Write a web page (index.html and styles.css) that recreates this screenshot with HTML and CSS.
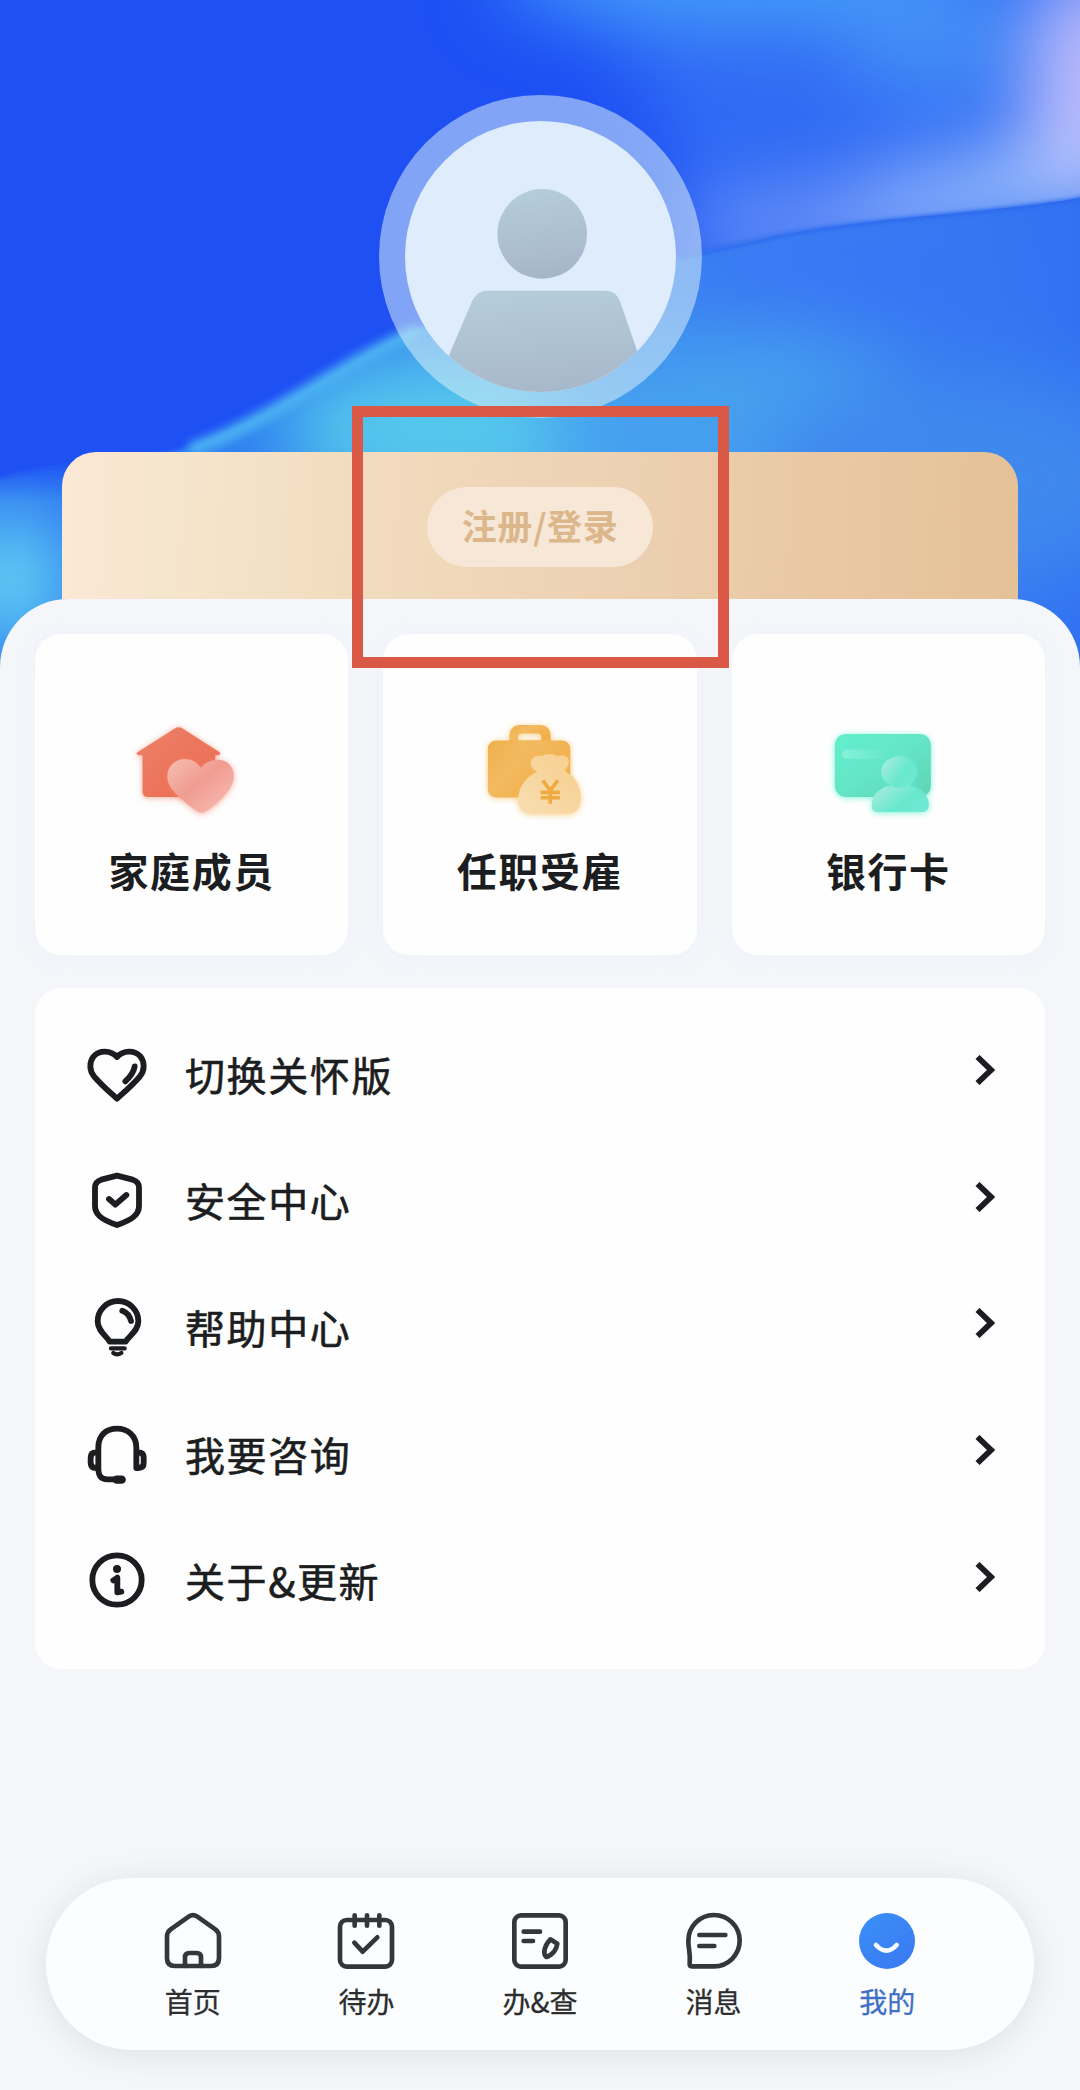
FILE: index.html
```
<!DOCTYPE html>
<html lang="zh-CN">
<head>
  <meta charset="UTF-8" />
  <meta name="viewport" content="width=device-width, initial-scale=1.0"/>
  <title>我的</title>
  <link rel="stylesheet" href="styles.css">
</head>
<body>
  <header class="hero">
    <svg class="hero-bg" viewBox="0 0 1080 700" preserveAspectRatio="none" color-interpolation-filters="sRGB">
      <defs>
        <linearGradient id="wave" x1="0" x2="1080" y1="0" y2="0" gradientUnits="userSpaceOnUse">
          <stop offset="0" stop-color="#2f7cf2"/>
          <stop offset=".3" stop-color="#2f80f0"/>
          <stop offset=".55" stop-color="#3b86f1"/>
          <stop offset=".75" stop-color="#3a7ff3"/>
          <stop offset="1" stop-color="#3272f2"/>
        </linearGradient>
        <linearGradient id="edge" x1="0" x2="0" y1="455" y2="500" gradientUnits="userSpaceOnUse">
          <stop offset="0" stop-color="#1e50f4"/>
          <stop offset="1" stop-color="#1e50f4" stop-opacity="0"/>
        </linearGradient>
        <filter id="blur2" x="-10%" y="-10%" width="120%" height="120%"><feGaussianBlur stdDeviation="2"/></filter>
        <filter id="blur5" x="-20%" y="-20%" width="140%" height="140%"><feGaussianBlur stdDeviation="5"/></filter>
        <filter id="blur40" filterUnits="userSpaceOnUse" x="-300" y="-300" width="1700" height="1300"><feGaussianBlur stdDeviation="38"/></filter>
        <clipPath id="waveClip">
          <path d="M1080 198C990 214 850 218 760 240C690 258 500 290 420 328C340 362 260 430 170 452C100 462 40 466 0 478V700H1080Z"/>
        </clipPath>
        <clipPath id="skyClip">
          <path d="M0 0H1080V198C990 214 850 218 760 240C690 258 500 290 420 328L0 478Z"/>
        </clipPath>
      </defs>
      <rect width="1080" height="700" fill="#1e50f4"/>
      <g clip-path="url(#skyClip)">
        <g filter="url(#blur40)">
          <path d="M480 -100H1250V280L660 320C720 200 660 60 480 -100Z" fill="#316bf4"/>
          <ellipse cx="740" cy="-20" rx="240" ry="44" fill="#459ffa"/>
          <ellipse cx="930" cy="40" rx="90" ry="60" fill="#438df6"/>
          <ellipse cx="960" cy="195" rx="200" ry="36" fill="#93b6fb" transform="rotate(-12 960 195)"/>
          <ellipse cx="780" cy="225" rx="100" ry="26" fill="#7a9cf8"/>
          <ellipse cx="1090" cy="90" rx="62" ry="130" fill="#c0bdfb"/>
          <ellipse cx="1040" cy="185" rx="90" ry="24" fill="#a9ccfb"/>
        </g>
      </g>
      <path d="M1085 197C990 214 850 218 760 240C690 258 500 290 420 328C340 362 260 430 170 452C100 464 40 466 -10 482V710H1085Z" fill="url(#wave)" filter="url(#blur2)"/>
      <g clip-path="url(#waveClip)">
        <g filter="url(#blur40)">
          <ellipse cx="470" cy="430" rx="190" ry="80" fill="#55c8ec"/>
          <ellipse cx="740" cy="420" rx="200" ry="90" fill="#46a0ee"/>
          <ellipse cx="960" cy="480" rx="200" ry="110" fill="#3f88ee"/>
          <ellipse cx="10" cy="580" rx="56" ry="66" fill="#66d6f2"/>
          <ellipse cx="850" cy="280" rx="200" ry="30" fill="#3974f4"/>
        </g>
        <rect x="0" y="440" width="100" height="70" fill="url(#edge)"/>
      </g>
      <path d="M420 330C340 364 265 425 190 450" fill="none" stroke="#4bb0f2" stroke-width="14" filter="url(#blur5)"/>
      <path d="M1085 199C990 215 850 219 760 240C740 245 720 249 690 254" fill="none" stroke="#2f6dec" stroke-width="3" filter="url(#blur2)"/>
    </svg>

    <div class="avatar">
      <svg viewBox="405 121 270 270">
        <defs>
          <linearGradient id="person" x1="0" x2=".15" y1="0" y2="1">
            <stop offset="0" stop-color="#b6cedb"/>
            <stop offset="1" stop-color="#a7b7ca"/>
          </linearGradient>
          <clipPath id="face"><circle cx="540" cy="256" r="135"/></clipPath>
        </defs>
        <circle cx="540" cy="256" r="135" fill="#deecfb"/>
        <g clip-path="url(#face)" fill="url(#person)">
          <circle cx="541.7" cy="233.5" r="44.7"/>
          <path d="M486 290H605Q615 290 619 300L645 375V400H440V375L472 300Q477 290 486 290Z"/>
        </g>
      </svg>
    </div>

    <div class="login-card">
      <button class="login-button">注册/登录</button>
    </div>
    <div class="highlight"></div>
  </header>

  <main class="sheet">
    <div class="cards">
      <div class="card">
        <svg class="card-icon" viewBox="350 300 330 310">
          <defs>
            <linearGradient id="house" x1="0" x2="1" y1="0" y2="1">
              <stop offset="0" stop-color="#eb8168"/><stop offset="1" stop-color="#ee6a50"/>
            </linearGradient>
            <linearGradient id="heart" x1="0" x2="1" y1="0" y2="1">
              <stop offset="0" stop-color="#f6bfb1"/><stop offset=".45" stop-color="#f19c92"/><stop offset="1" stop-color="#f8beb6"/>
            </linearGradient>
          </defs>
          <path class="glow-red" d="M462 326Q475 317 488 326L597 396Q604 403 594 406H585V515Q585 532 568 532H383Q366 532 366 515V406H354Q344 402 351 397Z" fill="url(#house)"/>
          <path class="glow-red" d="M542 444C524 415 485 408 458 430C434 452 436 486 456 510C476 534 504 556 526 572Q544 586 562 572C584 558 604 540 622 516C646 486 648 452 624 430C600 412 562 418 542 444Z" fill="url(#heart)"/>
        </svg>
        <span>家庭成员</span>
      </div>
      <div class="card">
        <svg class="card-icon" viewBox="345 300 330 310">
          <defs>
            <linearGradient id="case" x1="0" x2="1" y1="0" y2=".6">
              <stop offset="0" stop-color="#f0b04c"/><stop offset=".4" stop-color="#f2ba60"/><stop offset="1" stop-color="#f2ae48"/>
            </linearGradient>
            <linearGradient id="bag" x1="0" x2="1" y1="1" y2="0">
              <stop offset="0" stop-color="#f8deb2"/><stop offset="1" stop-color="#f6ce8c"/>
            </linearGradient>
          </defs>
          <g class="glow-gold" fill="url(#case)">
            <path fill-rule="evenodd" d="M418 366V350Q418 315 452 315H508Q542 315 542 350V366ZM444 362H514V352Q514 341 503 341H455Q444 341 444 352Z"/>
            <rect x="353" y="362" width="248" height="171" rx="24"/>
          </g>
          <path class="glow-gold" d="M502 456Q480 444 483 426Q487 404 514 408Q540 396 560 408Q592 402 596 420Q599 440 584 450L590 458C616 470 632 500 633 535Q632 580 594 582H484Q444 580 444 538C446 500 470 470 502 456Z" fill="url(#bag)"/>
          <path d="M518 482L541 512L564 482M541 512V552M512 518H570M512 534H570" fill="none" stroke="#efab42" stroke-width="11"/>
        </svg>
        <span>任职受雇</span>
      </div>
      <div class="card">
        <svg class="card-icon" viewBox="340 300 330 310">
          <defs>
            <linearGradient id="bank" x1="0" x2="1" y1="0" y2="1">
              <stop offset="0" stop-color="#62efcd"/><stop offset=".5" stop-color="#64e5c6"/><stop offset="1" stop-color="#5fd3b4"/>
            </linearGradient>
            <linearGradient id="holder" x1="0" x2="1" y1=".2" y2=".8">
              <stop offset="0" stop-color="#a7ecdc"/><stop offset=".6" stop-color="#67e8ce"/><stop offset="1" stop-color="#72e8d2"/>
            </linearGradient>
            <linearGradient id="stripe"><stop offset="0" stop-color="#84f3d8"/><stop offset="1" stop-color="#62e6c6"/></linearGradient>
          </defs>
          <rect class="glow-green" x="345" y="342" width="289" height="190" rx="34" fill="url(#bank)"/>
          <rect x="366" y="389" width="150" height="28" rx="14" fill="url(#stripe)"/>
          <g class="glow-green" fill="url(#holder)">
            <path d="M456 560C456 525 478 504 514 497H568C606 504 628 528 628 556Q628 577 606 577H478Q456 577 456 560Z"/>
            <ellipse cx="539" cy="456" rx="54" ry="47"/>
          </g>
        </svg>
        <span>银行卡</span>
      </div>
    </div>

    <ul class="menu">
      <li>
        <svg class="menu-icon" viewBox="192 219 198 198">
          <path d="M291 264C272 243 238 243 221 262C207 280 208 304 222 322C242 346 270 370 291 389C312 370 340 346 360 322C374 304 375 280 361 262C344 243 310 243 291 264Z"/>
          <path d="M344 292Q341 314 316 337"/>
        </svg>
        <span>切换关怀版</span>
        <svg class="arrow" viewBox="0 0 20 30"><path d="M2.5 2L16 15L2.5 28"/></svg>
      </li>
      <li>
        <svg class="menu-icon" viewBox="192 597 198 198">
          <path d="M291 617L338 629Q357 635 357 652V708C357 734 336 750 291 765C246 750 225 734 225 708V652Q225 635 244 629Z"/>
          <path d="M267 687L286 704L319 675"/>
        </svg>
        <span>安全中心</span>
        <svg class="arrow" viewBox="0 0 20 30"><path d="M2.5 2L16 15L2.5 28"/></svg>
      </li>
      <li>
        <svg class="menu-icon" viewBox="192 47 198 198">
          <path d="M269 187C260 170 233 156 233 126A61 61 0 0 1 355 126C355 156 326 170 317 187Z"/>
          <path d="M307 94Q328 102 333 125"/>
          <path class="thin" d="M273 207H314M280 221Q291 229 304 221"/>
        </svg>
        <span>帮助中心</span>
        <svg class="arrow" viewBox="0 0 20 30"><path d="M2.5 2L16 15L2.5 28"/></svg>
      </li>
      <li>
        <svg class="menu-icon" viewBox="192 427 198 198">
          <path d="M235 568V504C235 466 259 447 291 447C323 447 349 468 349 504V565H355Q371 565 371 551V533Q371 518 355 518H349M235 518H228Q212 518 212 534V550Q212 565 228 565H235C235 588 242 599 262 599H296"/>
          <path class="fat" d="M290 600H305"/>
        </svg>
        <span>我要咨询</span>
        <svg class="arrow" viewBox="0 0 20 30"><path d="M2.5 2L16 15L2.5 28"/></svg>
      </li>
      <li>
        <svg class="menu-icon" viewBox="192 806 198 198">
          <circle cx="291" cy="899" r="74"/>
          <circle class="dot" cx="291" cy="866" r="12"/>
          <path d="M280 900L292 892V936L304 934"/>
        </svg>
        <span>关于&amp;更新</span>
        <svg class="arrow" viewBox="0 0 20 30"><path d="M2.5 2L16 15L2.5 28"/></svg>
      </li>
    </ul>
  </main>

  <nav class="tabbar">
    <a class="tab">
      <svg viewBox="392 147 192 192">
        <path d="M475 170Q488 161 501 170L555 208Q566 216 566 230V294Q566 318 542 318H434Q410 318 410 294V230Q410 216 421 208Z"/>
        <path d="M464 318V292Q464 279 477 279H499Q512 279 512 292V318"/>
      </svg>
      <span>首页</span>
    </a>
    <a class="tab">
      <svg viewBox="914 147 192 192">
        <rect x="932" y="180" width="156" height="140" rx="20"/>
        <path d="M976 166V197M1013 166V197M1050 166V197M975 248L1000 275L1044 232"/>
      </svg>
      <span>待办</span>
    </a>
    <a class="tab">
      <svg viewBox="234 147 192 192">
        <rect x="253" y="166" width="154" height="154" rx="20"/>
        <path d="M281 215H330M281 243H309"/>
        <path d="M361 238L382 251C380 266 370 284 349 291C338 282 342 258 361 238Z"/>
      </svg>
      <span>办&amp;查</span>
    </a>
    <a class="tab">
      <svg viewBox="755 147 192 192">
        <path d="M784 319Q778 319 778 312C781 278 774 268 774 243A77 77 0 1 1 851 319Z"/>
        <path d="M807 225H885M807 258H852"/>
      </svg>
      <span>消息</span>
    </a>
    <a class="tab active">
      <svg viewBox="316 147 192 192">
        <defs>
          <linearGradient id="smile" x1="0" x2=".6" y1="0" y2="1">
            <stop offset="0" stop-color="#3a8ff8"/><stop offset="1" stop-color="#3a7cf2"/>
          </linearGradient>
        </defs>
        <circle class="disc" cx="412" cy="243" r="84"/>
        <path class="mouth" d="M379 255Q410 289 441 255"/>
      </svg>
      <span>我的</span>
    </a>
  </nav>
</body>
</html>
```
FILE: styles.css
```
* { box-sizing: border-box; }
body {
  margin: 0;
  width: 1080px;
  height: 2090px;
  overflow: hidden;
  background: #f4f6fa;
  color: #1b1d20;
  font-family: "Noto Sans CJK SC", sans-serif;
  display: flex;
  flex-direction: column;
}
svg { display: block; }

.hero {
  position: relative;
  height: 599px;
  flex-shrink: 0;
  padding-top: 95px;
  display: flex;
  flex-direction: column;
  align-items: center;
}
.hero-bg {
  position: absolute;
  top: 0;
  left: 0;
  width: 1080px;
  height: 700px;
}
.avatar {
  position: relative;
  width: 323px;
  height: 323px;
  padding: 26px;
  border-radius: 50%;
  background: rgba(222, 242, 248, 0.52);
}
.avatar svg { width: 271px; height: 271px; }
.login-card {
  position: relative;
  width: 956px;
  height: 147px;
  margin-top: 34px;
  padding-top: 35px;
  border-radius: 34px 34px 0 0;
  background: linear-gradient(93deg, #fbe8d6 0%, #f6e5cd 12%, #f2dcbf 30%, #edd2b4 55%, #e9c8a3 80%, #e4c197 100%);
  text-align: center;
}
.login-button {
  width: 226px;
  height: 80px;
  padding: 0 0 6px;
  border: none;
  border-radius: 40px;
  background: #f7e7d6;
  color: #dcb78c;
  font-family: inherit;
  font-size: 35px;
  font-weight: bold;
  letter-spacing: 0.6px;
  cursor: pointer;
}
.highlight {
  position: absolute;
  z-index: 2;
  left: 352px;
  top: 406px;
  width: 377px;
  height: 262px;
  border: 11px solid #d95946;
}

.sheet {
  position: relative;
  flex: 1;
  padding: 35px 35px 0;
  border-radius: 68px 68px 0 0;
  background: #f4f6fa;
}
.cards {
  display: grid;
  grid-template-columns: repeat(3, 1fr);
  gap: 35px;
}
.card {
  height: 321px;
  padding-top: 86px;
  border-radius: 26px;
  background: #fefefe;
  box-shadow: 0 4px 16px rgba(228, 238, 247, 0.35);
  display: flex;
  flex-direction: column;
  align-items: center;
}
.card-icon {
  width: 110px;
  height: 103px;
  overflow: visible;
}
.card span {
  margin-top: 17px;
  font-size: 40px;
  line-height: 60px;
  font-weight: bold;
  letter-spacing: 1.6px;
}
.glow-red { filter: drop-shadow(0 3px 10px rgba(245, 130, 105, 0.65)); }
.glow-gold { filter: drop-shadow(0 3px 10px rgba(250, 190, 90, 0.7)); }
.glow-green { filter: drop-shadow(0 3px 10px rgba(90, 240, 205, 0.75)); }

.menu {
  list-style: none;
  margin: 33px 0 0;
  padding: 24px 50px 24px 49px;
  height: 681px;
  border-radius: 26px;
  background: #fefefe;
}
.menu li {
  height: 126.6px;
  display: flex;
  align-items: center;
}
.menu span {
  flex: 1;
  margin-left: 35px;
  margin-bottom: 3px;
  font-size: 40px;
  line-height: 60px;
  letter-spacing: 1.6px;
  -webkit-text-stroke: 0.6px #1b1d20;
}
.menu-icon {
  width: 66px;
  height: 66px;
  fill: none;
  stroke: #1b1d20;
  stroke-width: 17.5;
  stroke-linecap: round;
  stroke-linejoin: round;
}
.menu-icon .thin { stroke-width: 13; }
.menu-icon .fat { stroke-width: 25; }
.menu-icon .dot { fill: #1b1d20; stroke: none; }
.arrow {
  width: 20px;
  height: 30px;
  margin-bottom: 10px;
  fill: none;
  stroke: #1b1d20;
  stroke-width: 5.8;
}

.tabbar {
  position: absolute;
  left: 46px;
  top: 1878px;
  width: 988px;
  height: 172px;
  padding: 31px 60px 0;
  border-radius: 86px;
  background: #fcfdfe;
  box-shadow: 0 4px 34px rgba(0, 0, 0, 0.09);
  display: flex;
}
.tab {
  flex: 1;
  display: flex;
  flex-direction: column;
  align-items: center;
  color: #2b2d2f;
}
.tab svg {
  width: 64px;
  height: 64px;
  fill: none;
  stroke: #33373a;
  stroke-width: 14;
  stroke-linecap: round;
  stroke-linejoin: round;
}
.tab span {
  margin-top: 8px;
  font-size: 28px;
  line-height: 40px;
  -webkit-text-stroke: 0.3px;
}
.tab.active { color: #3f70c4; }
.tab .disc { fill: url(#smile); stroke: none; }
.tab .mouth { stroke: #f4faff; }
```
